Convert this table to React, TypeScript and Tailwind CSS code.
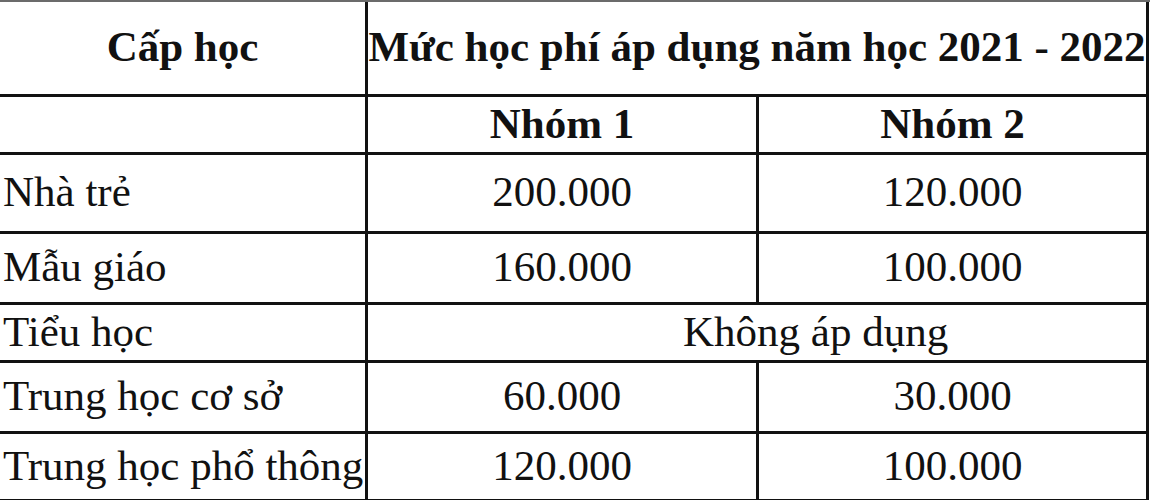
import React from 'react';

interface FeeRow {
  level: string;
  group1?: string;
  group2?: string;
  note?: string;
}

const rows: FeeRow[] = [
  { level: 'Nhà trẻ', group1: '200.000', group2: '120.000' },
  { level: 'Mẫu giáo', group1: '160.000', group2: '100.000' },
  { level: 'Tiểu học', note: 'Không áp dụng' },
  { level: 'Trung học cơ sở', group1: '60.000', group2: '30.000' },
  { level: 'Trung học phổ thông', group1: '120.000', group2: '100.000' },
];

const cell = 'flex items-center border-r-[3px] border-b-[3px] border-[#111] pb-[3px]';

export default function App() {
  return (
    <div className="w-[1150px] h-[500px] bg-white overflow-hidden font-['Liberation_Serif',serif] text-[43px] leading-none text-[#111]">
      <div className="grid grid-cols-[368px_391px_390px] grid-rows-[95px_58px_79px_71px_58px_71px_68px] border-t-2 border-[#6b6b6b]">
        {/* Header */}
        <div className={`${cell} justify-center font-bold`}>Cấp học</div>
        <div className={`${cell} col-span-2 justify-center font-bold whitespace-nowrap`}>
          Mức học phí áp dụng năm học 2021 - 2022
        </div>

        <div className={cell} />
        <div className={`${cell} justify-center font-bold`}>Nhóm 1</div>
        <div className={`${cell} justify-center font-bold`}>Nhóm 2</div>

        {/* Body */}
        {rows.map((row) => (
          <React.Fragment key={row.level}>
            <div className={`${cell} pl-[3px] whitespace-nowrap`}>{row.level}</div>
            {row.note ? (
              <div className={`${cell} col-span-2 pl-[315px]`}>{row.note}</div>
            ) : (
              <>
                <div className={`${cell} justify-center`}>{row.group1}</div>
                <div className={`${cell} justify-center`}>{row.group2}</div>
              </>
            )}
          </React.Fragment>
        ))}
      </div>
    </div>
  );
}
